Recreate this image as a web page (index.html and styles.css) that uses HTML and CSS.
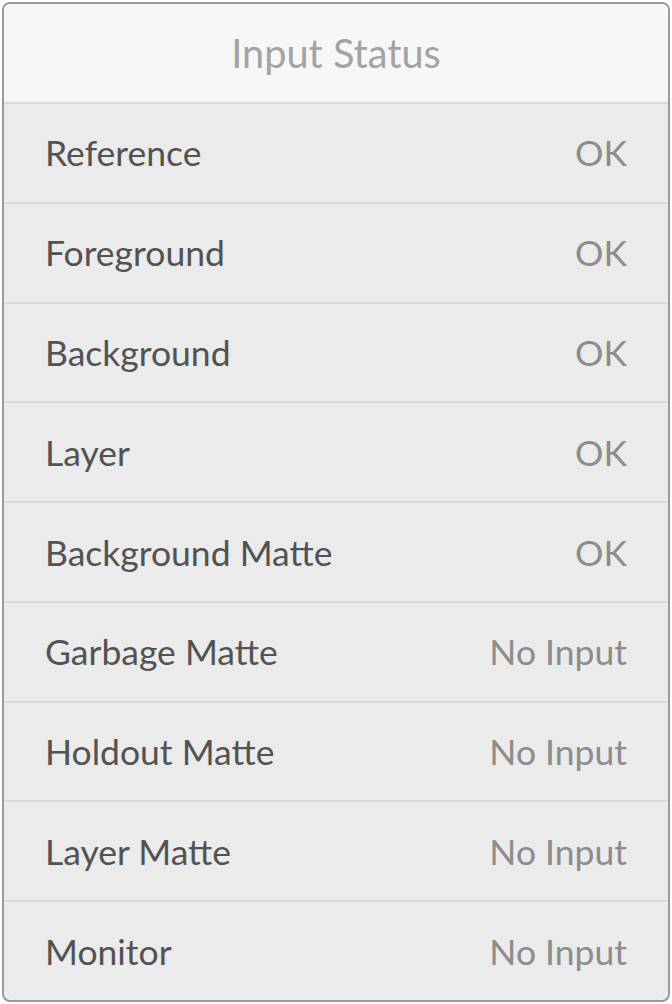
FILE: index.html
```html
<!DOCTYPE html>
<html>
<head>
<meta charset="utf-8">
<link rel="stylesheet" href="styles.css">
</head>
<body>
<div class="panel">
  <div class="header">Input Status</div>
  <div class="row"><span class="label">Reference</span><span class="value">OK</span></div>
  <div class="row"><span class="label">Foreground</span><span class="value">OK</span></div>
  <div class="row"><span class="label">Background</span><span class="value">OK</span></div>
  <div class="row"><span class="label">Layer</span><span class="value">OK</span></div>
  <div class="row"><span class="label">Background Matte</span><span class="value">OK</span></div>
  <div class="row"><span class="label">Garbage Matte</span><span class="value">No Input</span></div>
  <div class="row"><span class="label">Holdout Matte</span><span class="value">No Input</span></div>
  <div class="row"><span class="label">Layer Matte</span><span class="value">No Input</span></div>
  <div class="row"><span class="label">Monitor</span><span class="value">No Input</span></div>
</div>
</body>
</html>
```
FILE: styles.css
```css
html, body {
  margin: 0;
  padding: 0;
  background: #ffffff;
}
body {
  padding: 2px;
  font-family: "Lato", "Liberation Sans", sans-serif;
}
.panel {
  width: 668px;
  height: 1000px;
  box-sizing: border-box;
  border: 2px solid #9a9a9a;
  border-radius: 8px;
  overflow: hidden;
  background: #ebebeb;
  display: flex;
  flex-direction: column;
}
.header {
  height: 98px;
  flex: none;
  background: #f7f7f7;
  color: #a3a3a3;
  font-size: 39.7px;
  display: flex;
  align-items: center;
  justify-content: center;
  padding-bottom: 2px;
  box-sizing: border-box;
}
.row {
  flex: 1;
  border-top: 2px solid #d9d9d9;
  display: flex;
  align-items: center;
  justify-content: space-between;
  padding: 0 41px 0 41px;
  font-size: 35.5px;
}
.label {
  color: #525252;
}
.value {
  color: #8c8c8c;
}
```
